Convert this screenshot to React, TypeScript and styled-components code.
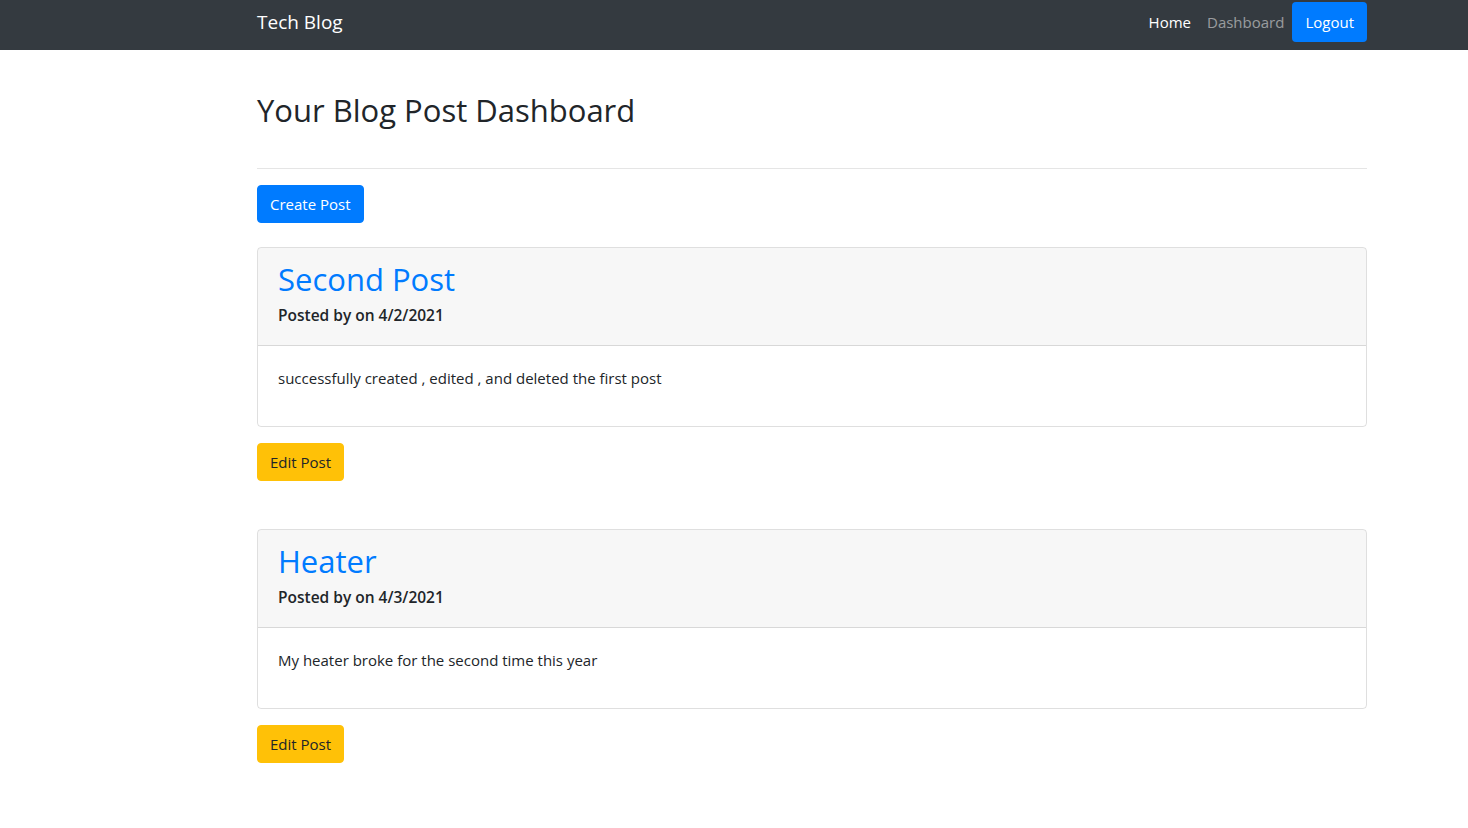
import React from "react";
import styled, { createGlobalStyle } from "styled-components";

const GlobalStyle = createGlobalStyle`
  *, *::before, *::after { box-sizing: border-box; }
  html, body { margin: 0; padding: 0; background: #fff; }
  body {
    font-family: "Open Sans", "Noto Sans", "Liberation Sans", sans-serif;
    font-size: 15px;
    line-height: 24px;
    color: #212529;
  }
`;

const Navbar = styled.nav`
  background: #343a40;
  height: 50px;
  padding-top: 2px;
`;

const Container = styled.div`
  width: 1110px;
  margin-left: auto;
  margin-right: 101px;
`;

const NavInner = styled(Container)`
  display: flex;
  align-items: center;
  justify-content: space-between;
`;

const Brand = styled.a`
  color: #fff;
  font-size: 19px;
  line-height: 30px;
  padding: 5px 0;
  text-decoration: none;
`;

const NavList = styled.div`
  display: flex;
  align-items: center;
`;

const NavLink = styled.a<{ $active?: boolean; $primary?: boolean }>`
  display: block;
  padding: 8px;
  line-height: 24px;
  font-size: 15px;
  text-decoration: none;
  color: ${(p) => (p.$active || p.$primary ? "#fff" : "rgba(255,255,255,0.5)")};
  background: ${(p) => (p.$primary ? "#007bff" : "transparent")};
  border-radius: ${(p) => (p.$primary ? "4px" : "0")};
  padding-left: ${(p) => (p.$primary ? "13px" : "8px")};
  padding-right: ${(p) => (p.$primary ? "13px" : "8px")};
`;

const Main = styled(Container)`
  padding-top: 41px;
  padding-bottom: 40px;
`;

const PageTitle = styled.h1`
  font-size: 31px;
  font-weight: 500;
  line-height: 38.4px;
  margin: 0 0 39px;
`;

const Rule = styled.hr`
  border: 0;
  border-top: 1px solid rgba(0, 0, 0, 0.1);
  margin: 0 0 16px;
`;

const Button = styled.button<{ $variant: "primary" | "warning" }>`
  display: inline-block;
  font-family: inherit;
  font-size: 15px;
  line-height: 24px;
  padding: 6px 12px;
  border-radius: 4px;
  border: 1px solid ${(p) => (p.$variant === "primary" ? "#007bff" : "#ffc107")};
  background: ${(p) => (p.$variant === "primary" ? "#007bff" : "#ffc107")};
  color: ${(p) => (p.$variant === "primary" ? "#fff" : "#212529")};
  cursor: pointer;
`;

const CreateRow = styled.div`
  margin-bottom: 24px;
`;

const PostBlock = styled.section`
  margin-bottom: 48px;
`;

const Card = styled.div`
  border: 1px solid rgba(0, 0, 0, 0.125);
  border-radius: 4px;
  margin-bottom: 16px;
  overflow: hidden;
`;

const CardHeader = styled.div`
  background: rgba(0, 0, 0, 0.03);
  border-bottom: 1px solid rgba(0, 0, 0, 0.125);
  padding: 12px 20px;
`;

const PostTitle = styled.h2`
  font-size: 31px;
  font-weight: 500;
  line-height: 38px;
  color: #007bff;
  margin: 0 0 8px;
`;

const Meta = styled.h6`
  font-size: 15.5px;
  font-weight: 600;
  line-height: 19px;
  margin: 0 0 8px;
`;

const CardBody = styled.div`
  padding: 20px;
`;

const BodyText = styled.p`
  margin: 0 0 16px;
`;

const posts = [
  { title: "Second Post", date: "4/2/2021", body: "successfully created , edited , and deleted the first post" },
  { title: "Heater", date: "4/3/2021", body: "My heater broke for the second time this year" },
];

export default function App() {
  return (
    <>
      <GlobalStyle />
      <Navbar>
        <NavInner>
          <Brand href="#">Tech Blog</Brand>
          <NavList>
            <NavLink $active href="#">Home</NavLink>
            <NavLink href="#">Dashboard</NavLink>
            <NavLink $primary href="#">Logout</NavLink>
          </NavList>
        </NavInner>
      </Navbar>
      <Main>
        <PageTitle>Your Blog Post Dashboard</PageTitle>
        <Rule />
        <CreateRow>
          <Button $variant="primary">Create Post</Button>
        </CreateRow>
        {posts.map((p) => (
          <PostBlock key={p.title}>
            <Card>
              <CardHeader>
                <PostTitle>{p.title}</PostTitle>
                <Meta>Posted by on {p.date}</Meta>
              </CardHeader>
              <CardBody>
                <BodyText>{p.body}</BodyText>
              </CardBody>
            </Card>
            <Button $variant="warning">Edit Post</Button>
          </PostBlock>
        ))}
      </Main>
    </>
  );
}
